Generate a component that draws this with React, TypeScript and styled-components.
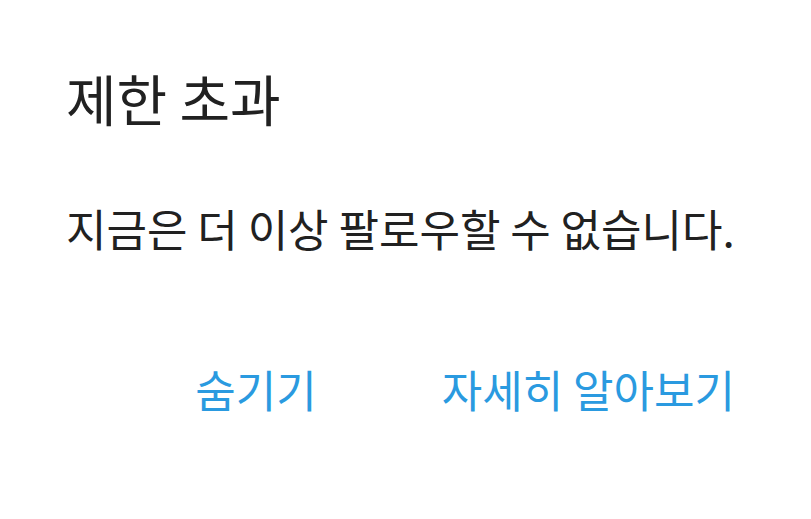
import { FC } from 'react'
import styled, { createGlobalStyle } from 'styled-components'

const GlobalStyle = createGlobalStyle`
  html, body {
    margin: 0;
    padding: 0;
    background: #fff;
  }
  body {
    font-family: 'Noto Sans CJK KR', 'Noto Sans', sans-serif;
  }
`

const Dialog = styled.div`
  width: 811px;
  height: 519px;
  box-sizing: border-box;
  background: #fff;
  padding: 62px 76px 0 66px;
  display: flex;
  flex-direction: column;
`

const Title = styled.h2`
  margin: 0;
  font-size: 55px;
  line-height: 70px;
  font-weight: 400;
  color: #212121;
`

const Message = styled.p`
  margin: 66px 0 0 0;
  font-size: 44px;
  line-height: 60px;
  font-weight: 400;
  color: #212121;
  white-space: nowrap;
`

const Actions = styled.div`
  display: flex;
  justify-content: flex-end;
  gap: 125px;
  margin-top: 101px;
`

const ActionButton = styled.button`
  border: none;
  background: none;
  padding: 0;
  font-family: inherit;
  font-size: 44px;
  line-height: 60px;
  font-weight: 400;
  color: #2a9ae0;
  cursor: pointer;
`

const LimitDialog: FC = () => (
  <Dialog>
    <Title>제한 초과</Title>
    <Message>지금은 더 이상 팔로우할 수 없습니다.</Message>
    <Actions>
      <ActionButton>숨기기</ActionButton>
      <ActionButton>자세히 알아보기</ActionButton>
    </Actions>
  </Dialog>
)

export default function App() {
  return (
    <>
      <GlobalStyle />
      <LimitDialog />
    </>
  )
}
